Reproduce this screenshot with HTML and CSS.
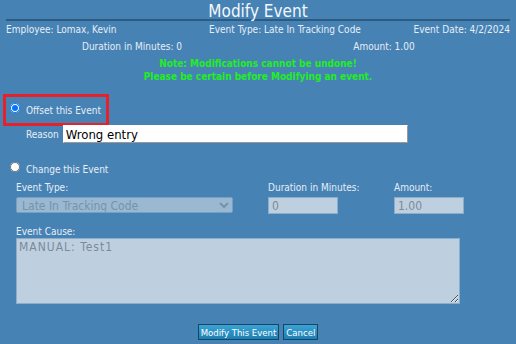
FILE: index.html
```html
<!DOCTYPE html>
<html>
<head>
    <meta charset="UTF-8">
    <title>Modify Event</title>
    <link rel="stylesheet" href="styles.css">
</head>
<body>
    <div class="dialog">
        <h1 class="title">Modify Event</h1>

        <div class="info-row three">
            <span>Employee: Lomax, Kevin</span>
            <span>Event Type: Late In Tracking Code</span>
            <span class="right">Event Date: 4/2/2024</span>
        </div>
        <div class="info-row two">
            <span>Duration in Minutes: 0</span>
            <span>Amount: 1.00</span>
        </div>

        <div class="note">
            Note: Modifications cannot be undone!<br>
            Please be certain before Modifying an event.
        </div>

        <div class="option">
            <label class="radio-label highlight">
                <input type="radio" name="mode" value="offset" checked>
                Offset this Event
            </label>
            <div class="reason-row">
                <span class="small-label">Reason</span>
                <input type="text" class="reason-input" value="Wrong entry">
            </div>
        </div>

        <div class="option change">
            <label class="radio-label">
                <input type="radio" name="mode" value="change">
                Change this Event
            </label>
            <div class="fields">
                <div class="field">
                    <label class="field-label">Event Type:</label>
                    <select disabled>
                        <option>Late In Tracking Code</option>
                    </select>
                </div>
                <div class="field">
                    <label class="field-label">Duration in Minutes:</label>
                    <input type="text" class="small-input" value="0" disabled>
                </div>
                <div class="field">
                    <label class="field-label">Amount:</label>
                    <input type="text" class="small-input" value="1.00" disabled>
                </div>
            </div>
            <div class="field cause-field">
                <label class="field-label">Event Cause:</label>
                <textarea disabled>MANUAL: Test1</textarea>
            </div>
        </div>

        <div class="buttons">
            <button>Modify This Event</button>
            <button>Cancel</button>
        </div>
    </div>
</body>
</html>
```

FILE: styles.css
```css
* {
    margin: 0;
    padding: 0;
    box-sizing: border-box;
    font-family: "DejaVu Sans Condensed", "DejaVu Sans", sans-serif;
}

body {
    background-color: #4682b4;
    color: #e6eef6;
    font-size: 10px;
}

.dialog {
    padding: 0 6px;
}

.title {
    font-size: 17px;
    font-weight: normal;
    color: #f4f8fc;
    text-align: center;
    line-height: 16px;
    padding-top: 3px;
    border-bottom: 2px solid #2c5a80;
}

.info-row {
    display: grid;
    line-height: 12px;
}

.info-row.three {
    grid-template-columns: 203px 1fr auto;
    margin-top: 3px;
}

.info-row.two {
    grid-template-columns: 1fr 1fr;
    text-align: center;
    margin-top: 5px;
}

.right {
    text-align: right;
}

.note {
    color: #22ee22;
    font-weight: bold;
    text-align: center;
    line-height: 13px;
    margin-top: 4px;
}

.option {
    margin-top: 11px;
}

.radio-label {
    display: flex;
    align-items: center;
    gap: 6px;
    padding-left: 4px;
    height: 20px;
}

.radio-label input {
    width: 10px;
    height: 10px;
    margin: 0;
    position: relative;
    top: -2px;
}

.highlight {
    width: 106px;
    height: 32px;
    margin-left: -3px;
    padding-left: 4px;
    border: 3px solid #e8202a;
}

.reason-row {
    display: flex;
    align-items: center;
    gap: 4px;
    padding-left: 20px;
    margin-top: -1px;
}

.reason-input {
    width: 345px;
    height: 18px;
    padding: 0 2px;
    font-size: 13px;
    color: #000;
    background: #fff;
    border: 1px solid #fff;
    border-right-color: #999;
    border-bottom-color: #999;
}

.change {
    margin-top: 16px;
}

.fields {
    display: grid;
    grid-template-columns: 252px 126px auto;
    padding-left: 10px;
    margin-top: 3px;
}

.field {
    display: flex;
    flex-direction: column;
    align-items: flex-start;
    gap: 3px;
}

.field-label {
    line-height: 12px;
}

select,
.small-input,
textarea {
    background-color: #bed0e0;
    border: 1px solid #8aaecc;
    color: #7c8a98;
    font-size: 12px;
    border-radius: 0;
}

select {
    width: 217px;
    height: 16px;
    padding: 0 1px;
    border-radius: 2px;
    color: #8a9aab;
}

.small-input {
    width: 70px;
    height: 17px;
    padding: 0 3px;
}

.cause-field {
    padding-left: 10px;
    margin-top: 12px;
    gap: 0;
}

textarea {
    width: 444px;
    height: 66px;
    padding: 1px 2px;
    letter-spacing: 1px;
    resize: both;
}

.buttons {
    display: flex;
    justify-content: center;
    gap: 4px;
    margin-top: 20px;
}

button {
    font-size: 9.5px;
    color: #fff;
    padding: 0 2px;
    height: 16px;
    background: linear-gradient(#3aa3d6, #1c7fb4);
    border: 1px solid #1a4460;
    cursor: pointer;
}
```
